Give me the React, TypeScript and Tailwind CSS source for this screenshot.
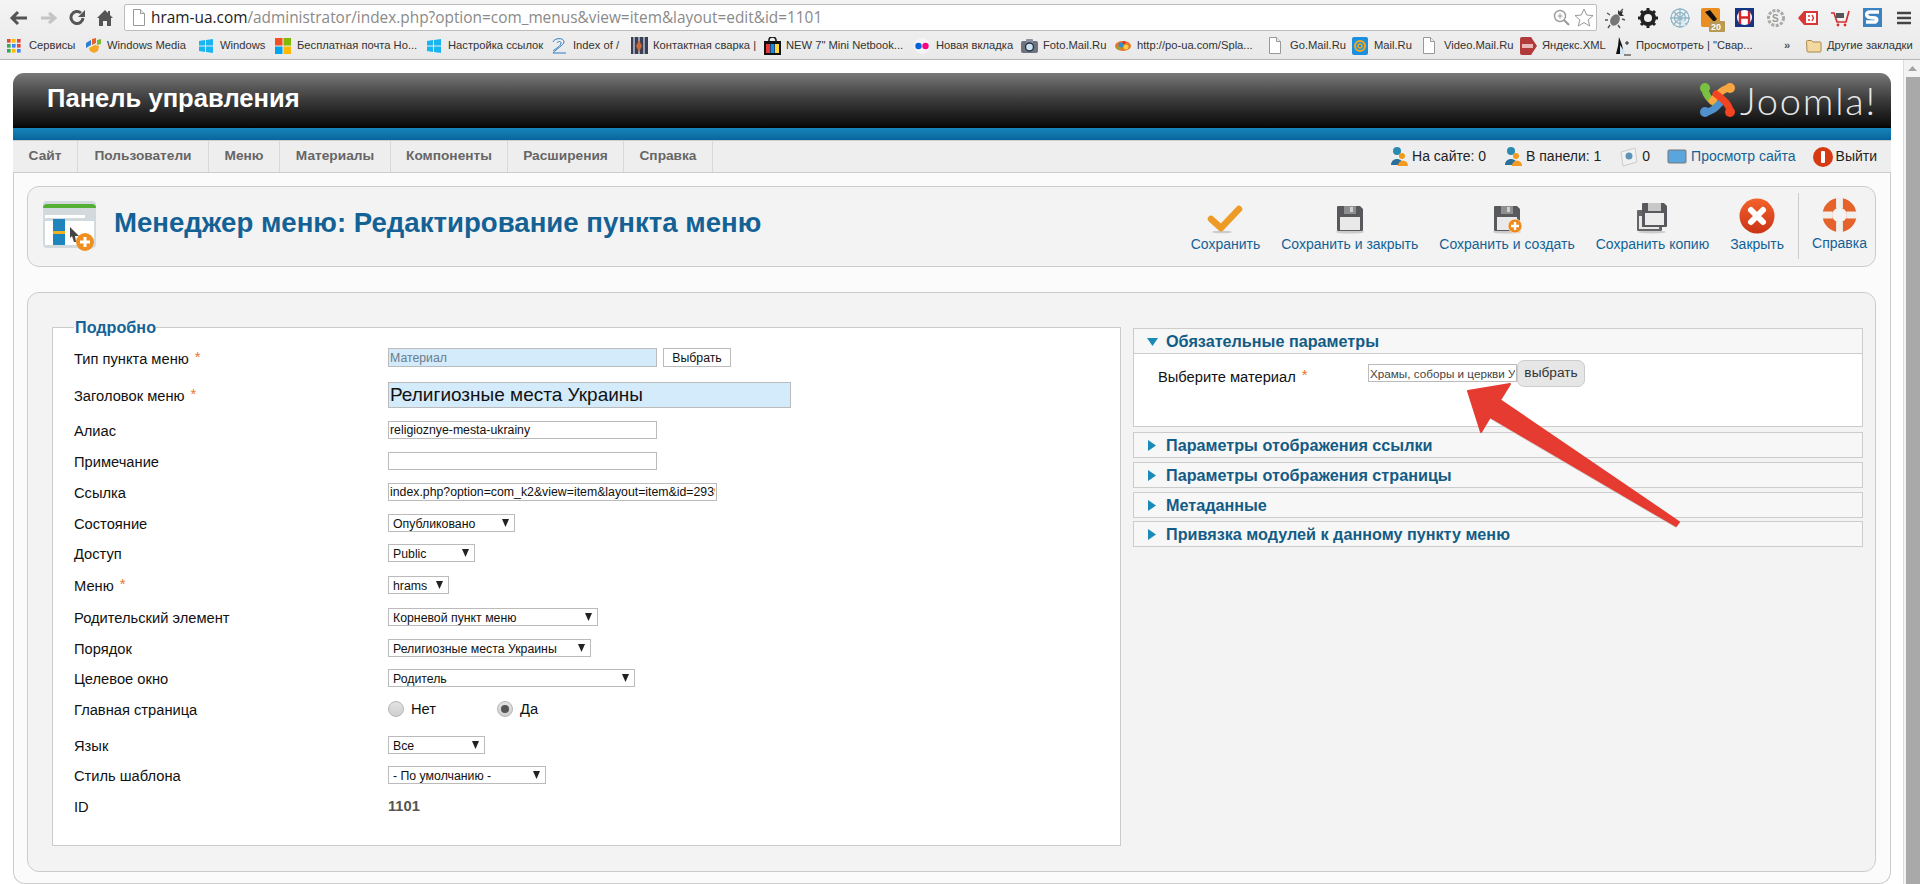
import React from "react";

const Win = ({ c = "#19b5f1" }: { c?: string }) => (
  <svg width="16" height="16" viewBox="0 0 16 16" className="shrink-0">
    <path d="M1 3l6-1v5.5H1zM8 2l7-1v6.5H8zM1 8.5h6V14l-6-1zM8 8.5h7V15l-7-1z" fill={c} />
  </svg>
);
const Page = () => (
  <svg width="14" height="17" viewBox="0 0 14 17" className="shrink-0 -mr-[3px]">
    <path d="M1.5.5h7l4 4v12h-11z" fill="#fff" stroke="#999" />
    <path d="M8.5.5v4h4" fill="#eee" stroke="#999" />
  </svg>
);

const bookmarks: { t: string; i: React.ReactNode; w: string }[] = [
  {
    t: "Сервисы",
    w: "w-[78px]",
    i: (
      <svg width="14" height="14" viewBox="0 0 14 14" className="shrink-0">
        {[0, 5, 10].map((y, r) =>
          [0, 5, 10].map((x, c) => (
            <rect key={`${r}${c}`} x={x} y={y} width="3.6" height="3.6" fill={[["#ea4335", "#fbbc05", "#ea4335"], ["#34a853", "#4285f4", "#ea4335"], ["#34a853", "#fbbc05", "#4285f4"]][r][c]} />
          )),
        )}
      </svg>
    ),
  },
  {
    t: "Windows Media",
    w: "w-[113px]",
    i: (
      <svg width="17" height="17" viewBox="0 0 17 17" className="shrink-0">
        <path d="M1 6l5-3v5l-5 3z" fill="#2d7fd3" />
        <path d="M7 2l4-1v5l-4 2z" fill="#e8612c" />
        <path d="M12 3l4-1v5l-4 1z" fill="#7cb82f" />
        <path d="M4 11l6-3 4 1-1 5-4 2-4-2z" fill="#f5a623" />
      </svg>
    ),
  },
  { t: "Windows", w: "w-[77px]", i: <Win /> },
  {
    t: "Бесплатная почта Но...",
    w: "w-[151px]",
    i: (
      <svg width="16" height="16" viewBox="0 0 16 16" className="shrink-0">
        <rect width="7.5" height="7.5" fill="#f25022" />
        <rect x="8.5" width="7.5" height="7.5" fill="#7fba00" />
        <rect y="8.5" width="7.5" height="7.5" fill="#00a4ef" />
        <rect x="8.5" y="8.5" width="7.5" height="7.5" fill="#ffb900" />
      </svg>
    ),
  },
  { t: "Настройка ссылок", w: "w-[125px]", i: <Win /> },
  {
    t: "Index of /",
    w: "w-[80px]",
    i: (
      <svg width="16" height="18" viewBox="0 0 16 18" className="shrink-0">
        <path d="M2 5c1-4 11-5 11 0 0 3-8 7-11 11h13M6 6c1-2 4-2 4 0 0 3-6 6-8 8" fill="none" stroke="#2f7fc6" strokeWidth="1" />
      </svg>
    ),
  },
  {
    t: "Контактная сварка |",
    w: "w-[133px]",
    i: (
      <svg width="17" height="17" viewBox="0 0 17 17" className="shrink-0">
        <rect width="17" height="17" fill="#3a3f55" />
        <path d="M3 0v17M8 0v17M13 0v17" stroke="#9aa0ae" strokeWidth="2" />
        <path d="M8 3l3 6-3 6-3-6z" fill="#c96a3a" />
      </svg>
    ),
  },
  {
    t: 'NEW 7" Mini Netbook...',
    w: "w-[150px]",
    i: (
      <svg width="17" height="18" viewBox="0 0 17 18" className="shrink-0">
        <rect y="4" width="17" height="14" fill="#111" />
        <rect x="2" y="7" width="4" height="9" fill="#e53935" />
        <rect x="6.5" y="7" width="4" height="9" fill="#1e88e5" />
        <rect x="11" y="7" width="4" height="9" fill="#fdd835" />
        <path d="M5 5V3a3.5 3 0 017 0v2" fill="none" stroke="#111" strokeWidth="1.5" />
      </svg>
    ),
  },
  {
    t: "Новая вкладка",
    w: "w-[107px]",
    i: (
      <svg width="16" height="16" viewBox="0 0 16 16" className="shrink-0">
        <circle cx="8" cy="8" r="8" fill="#f4f4f8" />
        <circle cx="4.5" cy="8" r="3.2" fill="#0063dc" />
        <circle cx="11.5" cy="8" r="3.2" fill="#ff0084" />
      </svg>
    ),
  },
  {
    t: "Foto.Mail.Ru",
    w: "w-[94px]",
    i: (
      <svg width="17" height="17" viewBox="0 0 17 17" className="shrink-0">
        <rect y="4" width="17" height="12" rx="2" fill="#6d7480" />
        <rect x="5" y="2" width="7" height="4" rx="1" fill="#8b919c" />
        <circle cx="8.5" cy="10" r="4" fill="#cfe3f2" stroke="#234" strokeWidth="1.4" />
      </svg>
    ),
  },
  {
    t: "http://po-ua.com/Spla...",
    w: "w-[153px]",
    i: (
      <svg width="16" height="14" viewBox="0 0 16 14" className="shrink-0">
        <ellipse cx="8" cy="7" rx="8" ry="5" fill="#e8762b" />
        <circle cx="6" cy="6" r="2.5" fill="#2a8fd6" />
        <circle cx="11" cy="8" r="2.5" fill="#f4d03f" />
        <circle cx="4" cy="9" r="1.6" fill="#6bbb3a" />
        <circle cx="9" cy="3.5" r="1.6" fill="#d6322a" />
      </svg>
    ),
  },
  { t: "Go.Mail.Ru", w: "w-[84px]", i: <Page /> },
  {
    t: "Mail.Ru",
    w: "w-[70px]",
    i: (
      <svg width="16" height="18" viewBox="0 0 16 18" className="shrink-0">
        <rect width="16" height="18" rx="2" fill="#1b8fe0" />
        <circle cx="8" cy="9" r="5" fill="none" stroke="#f6a91b" strokeWidth="2" />
        <circle cx="8" cy="9" r="2" fill="none" stroke="#f6a91b" strokeWidth="1.4" />
      </svg>
    ),
  },
  { t: "Video.Mail.Ru", w: "w-[98px]", i: <Page /> },
  {
    t: "Яндекс.XML",
    w: "w-[94px]",
    i: (
      <svg width="17" height="18" viewBox="0 0 17 18" className="shrink-0">
        <path d="M0 2a2 2 0 012-2h9l6 9-6 9H2a2 2 0 01-2-2z" fill="#b23a3a" />
        <rect x="2" y="7" width="11" height="4" fill="#e9b7b7" />
      </svg>
    ),
  },
  {
    t: 'Просмотреть | "Свар...',
    w: "w-[170px]",
    i: (
      <svg width="17" height="20" viewBox="0 0 17 20" className="shrink-0">
        <path d="M5 1l3 8 2 9H2l2-8z" fill="#111" />
        <path d="M6 9l6 9H6z" fill="#cfe6f7" />
        <path d="M11 7h4M13 5v4M10 19h7" stroke="#222" strokeWidth="1" />
      </svg>
    ),
  },
];

const Ext = ({ children }: { children: React.ReactNode }) => (
  <svg width="22" height="22" viewBox="0 0 22 22" className="shrink-0">
    {children}
  </svg>
);

const extensions = [
  <Ext key="a">
    <ellipse cx="10" cy="13" rx="4.5" ry="6" fill="#777" transform="rotate(30 10 13)" />
    <path d="M5 8l-3-2M3 13H0M5 18l-2 3M15 5l3-3M17 12l3 1M13 18l2 3" stroke="#555" strokeWidth="1.4" />
    <path d="M13 3l2 2 3-1-1 3 2 2-4 0-2-2z" fill="#333" />
  </Ext>,
  <Ext key="b">
    <circle cx="11" cy="11" r="6" fill="none" stroke="#222" strokeWidth="4" />
    <path d="M11 1v20M1 11h20M4 4l14 14M18 4L4 18" stroke="#222" strokeWidth="3" strokeDasharray="3 14" strokeDashoffset="0" />
  </Ext>,
  <Ext key="c">
    <g fill="none" stroke="#8fb7c9" strokeWidth="1.3">
      <circle cx="11" cy="11" r="9" />
      <circle cx="11" cy="11" r="5.5" />
      <path d="M11 1v20M1 11h20M4 4l14 14M18 4L4 18" />
    </g>
    <path d="M13 13l6 2-3 1 1 4-5-3z" fill="#dce9ef" />
  </Ext>,
  <svg key="d" width="26" height="26" viewBox="0 0 26 26" className="shrink-0 mt-[6px] ml-[3px]">
    <rect x="0" y="0" width="19" height="19" rx="2" fill="#e88e22" />
    <path d="M4 4l5-2 7 9-3 3z" fill="#111" />
    <rect x="8" y="13" width="16" height="11" rx="1" fill="#b89a55" />
    <text x="10" y="22" fontSize="9" fontWeight="700" fill="#fff" fontFamily="Liberation Sans, sans-serif">20</text>
  </svg>,
  <svg key="e" width="19" height="19" viewBox="0 0 19 19" className="shrink-0">
    <rect width="19" height="19" fill="#16347f" />
    <circle cx="9.5" cy="9.5" r="7.5" fill="#fff" />
    <path d="M5 3v13M14 3v13M5 9.5h9" stroke="#d8232a" strokeWidth="2.4" />
  </svg>,
  <Ext key="f">
    <circle cx="11" cy="11" r="7.5" fill="none" stroke="#aaa" strokeWidth="3" strokeDasharray="3 1.5" />
    <text x="7" y="15" fontSize="10" fontWeight="700" fill="#999" fontFamily="Liberation Sans, sans-serif">S</text>
  </Ext>,
  <Ext key="g">
    <path d="M1 11l6-7h14v14H7z" fill="#d93636" />
    <rect x="9" y="6" width="10" height="10" fill="#fff" />
    <path d="M12 8v2M12 12v2M15 8l1.5 3-1.5 3" stroke="#d93636" strokeWidth="1.5" fill="none" />
  </Ext>,
  <Ext key="h">
    <path d="M2 6h3l3 9h9l3-11" fill="none" stroke="#d32f2f" strokeWidth="1.7" />
    <circle cx="9" cy="18" r="1.4" fill="#d32f2f" />
    <circle cx="16" cy="18" r="1.4" fill="#d32f2f" />
    <rect x="7" y="6" width="8" height="5" fill="#555" />
  </Ext>,
  <svg key="i" width="19" height="19" viewBox="0 0 19 19" className="shrink-0">
    <rect width="19" height="19" fill="#3b82c0" />
    <path d="M16 4H7C2 4 3 9 7 9.5l5 .5c3 .5 2 4-1 4H3" fill="none" stroke="#fff" strokeWidth="3.4" />
  </svg>,
  <svg key="j" width="14" height="14" viewBox="0 0 14 14" className="shrink-0">
    <path d="M0 2h14M0 7h14M0 12h14" stroke="#444" strokeWidth="2.6" />
  </svg>,
];

const Floppy = ({ plus }: { plus?: boolean }) => (
  <svg width="30" height="30" viewBox="0 0 30 30">
    <ellipse cx="15" cy="28" rx="14" ry="1.6" fill="#ccc" />
    <path d="M2 3a1 1 0 011-1h22l3 3v21a1 1 0 01-1 1H3a1 1 0 01-1-1z" fill="#58595c" />
    <rect x="9" y="2" width="12" height="8" fill="#8f8f8f" />
    <rect x="15" y="3" width="3" height="5" fill="#d0d0d0" />
    <rect x="5" y="13" width="20" height="13" fill="#e9e9e9" />
    {plus && (
      <g>
        <circle cx="23" cy="22" r="7" fill="#ee8a1c" stroke="#fff" strokeWidth="0.6" />
        <path d="M23 18v8M19 22h8" stroke="#fff" strokeWidth="2.4" />
      </g>
    )}
  </svg>
);

const tools: { t: string; i: React.ReactNode }[] = [
  {
    t: "Сохранить",
    i: (
      <svg width="36" height="30" viewBox="0 0 36 30">
        <ellipse cx="15" cy="28" rx="10" ry="1.3" fill="#ccc" />
        <path d="M4 15l10 9L32 5" fill="none" stroke="#ee9a27" strokeWidth="6.5" strokeLinecap="round" strokeLinejoin="round" />
      </svg>
    ),
  },
  { t: "Сохранить и закрыть", i: <Floppy /> },
  { t: "Сохранить и создать", i: <Floppy plus /> },
  {
    t: "Сохранить копию",
    i: (
      <svg width="32" height="32" viewBox="0 0 32 32">
        <ellipse cx="16" cy="30" rx="14" ry="1.4" fill="#ccc" />
        <rect x="1" y="8" width="25" height="21" rx="1" fill="#666" />
        <rect x="3" y="14" width="20" height="13" fill="#e8e8e8" />
        <path d="M6 2a1 1 0 011-1h21l3 3v20a1 1 0 01-1 1H6z" fill="#58595c" />
        <rect x="12" y="1" width="13" height="8" fill="#c8c8c8" />
        <rect x="9" y="11" width="19" height="12" fill="#ececec" />
      </svg>
    ),
  },
  {
    t: "Закрыть",
    i: (
      <svg width="36" height="36" viewBox="0 0 36 36">
        <defs>
          <linearGradient id="rd" x1="0" y1="0" x2="0" y2="1">
            <stop offset="0" stopColor="#f4622c" />
            <stop offset="1" stopColor="#c93315" />
          </linearGradient>
        </defs>
        <circle cx="18" cy="18" r="17.5" fill="url(#rd)" />
        <path d="M12 12l12 12M24 12L12 24" stroke="#fff" strokeWidth="6" strokeLinecap="round" />
      </svg>
    ),
  },
];

const inputBase = "block h-full bg-white border border-[#bbb] px-[1px] text-[12.3px] text-[#111] outline-none";

const Sel = ({ v, w }: { v: string; w: string }) => (
  <span className={`relative block h-full ${w}`}>
    <select defaultValue={v} className="appearance-none block w-full h-full bg-white border border-[#bbb] pl-[4px] text-[12.3px] text-[#111] outline-none">
      <option>{v}</option>
    </select>
    <svg width="7" height="8" viewBox="0 0 7 8" className="absolute right-[6px] top-[5px]">
      <path d="M0 0h7L3.5 8z" fill="#222" />
    </svg>
  </span>
);

const Radio = ({ on }: { on?: boolean }) => (
  <span className="flex items-center justify-center w-[16px] h-[16px] rounded-full border border-[#b5b5b5] bg-gradient-to-b from-[#e2e2e2] to-[#cfcfcf]">
    {on && <span className="w-[8px] h-[8px] rounded-full bg-[#555]" />}
  </span>
);

const Star = () => <span className="text-[#e8762b] text-[15px] leading-none relative -top-[3px] ml-[6px]">*</span>;

const Row = ({ label, star, cls, children }: { label: string; star?: boolean; cls: string; children: React.ReactNode }) => (
  <div className={`flex items-center ${cls}`}>
    <span className="w-[314px] shrink-0 pt-[3px] text-[14.7px] text-[#111] flex items-center">
      {label}
      {star && <Star />}
    </span>
    {children}
  </div>
);

const Acc = ({ t, open, cls }: { t: string; open?: boolean; cls: string }) => (
  <div className={`flex items-center h-[26px] border border-[#ccc] bg-[#f7f7f7] pl-[13px] ${cls}`}>
    {open ? (
      <svg width="11" height="8" viewBox="0 0 11 8" className="shrink-0 mr-[8px] mt-[1px]">
        <path d="M0 0h11L5.5 8z" fill="#1a8ab8" />
      </svg>
    ) : (
      <svg width="8" height="11" viewBox="0 0 8 11" className="shrink-0 ml-[1px] mr-[10px]">
        <path d="M0 0l8 5.5L0 11z" fill="#1a8ab8" />
      </svg>
    )}
    <span className="text-[16.2px] font-bold text-[#135c85]">{t}</span>
  </div>
);

const Person = ({ c }: { c: string }) => (
  <svg width="20" height="22" viewBox="0 0 20 22" className="shrink-0">
    <circle cx="8" cy="5" r="4" fill={c} />
    <path d="M2 19c0-8 12-8 12 0z" fill="#2a6f9c" />
    <path d="M9 20c0-7 10-7 10 0z" fill="#f39a1e" />
    <circle cx="13" cy="10" r="3" fill="#f39a1e" />
  </svg>
);

const tabs = [
  ["Сайт", "w-[65px]"],
  ["Пользователи", "w-[131px]"],
  ["Меню", "w-[71px]"],
  ["Материалы", "w-[111px]"],
  ["Компоненты", "w-[117px]"],
  ["Расширения", "w-[116px]"],
  ["Справка", "w-[89px]"],
];

export default function App() {
  return (
    <div className="relative w-[1920px] h-[884px] overflow-hidden flex flex-col bg-white font-['Liberation_Sans',Arial,sans-serif]">
      {/* Browser chrome */}
      <div className="h-[60px] shrink-0 border-b border-[#b5b5b5] bg-gradient-to-b from-[#f4f4f4] to-[#e9e9e9] flex flex-col">
        <div className="h-[32px] flex items-center pt-[3px]">
          <div className="w-[124px] shrink-0 flex items-center pl-[9px] gap-[11px]">
            <svg width="20" height="16" viewBox="0 0 20 16">
              <path d="M18 8H4M9 2L3 8l6 6" fill="none" stroke="#555" strokeWidth="3" />
            </svg>
            <svg width="18" height="16" viewBox="0 0 18 16">
              <path d="M1 8h13M9 3l6 5-6 5" fill="none" stroke="#c4c4c4" strokeWidth="3" />
            </svg>
            <svg width="17" height="17" viewBox="0 0 17 17">
              <path d="M14 9a6 6 0 11-2-5" fill="none" stroke="#555" strokeWidth="3" />
              <path d="M16 1v7h-7z" fill="#555" />
            </svg>
            <svg width="16" height="16" viewBox="0 0 16 16">
              <path d="M8 0L0 8h2v8h4v-5h4v5h4V8h2l-3-3V1h-2v2z" fill="#555" />
            </svg>
          </div>
          <div className="w-[1473px] h-[27px] shrink-0 bg-white border border-[#bdbdbd] rounded-[2px] flex items-center pl-[7px] pr-[2px] font-['Open_Sans',sans-serif]">
            <Page />
            <span className="ml-[8px] text-[15.4px] text-[#222] whitespace-nowrap">
              hram-ua.com
              <span className="text-[#8a8a8a]">/administrator/index.php?option=com_menus&amp;view=item&amp;layout=edit&amp;id=1101</span>
            </span>
            <span className="ml-auto flex items-center gap-[4px]">
              <svg width="17" height="17" viewBox="0 0 17 17">
                <circle cx="7" cy="7" r="5.5" fill="none" stroke="#999" strokeWidth="1.4" />
                <path d="M11 11l5 5" stroke="#999" strokeWidth="2" />
                <path d="M7 4.5v5M4.5 7h5" stroke="#999" />
              </svg>
              <svg width="20" height="19" viewBox="0 0 20 19">
                <path d="M10 1l2.7 6 6.300.6-4.800 4.200 1.500 6.200L10 14.700l-5.700 3.300 1.500-6.200L1 7.600 7.300 7z" fill="#fff" stroke="#999" />
              </svg>
            </span>
          </div>
          <div className="flex-1 flex items-center pl-[3px]">
            {extensions.map((e, i) => (
              <div key={i} className="w-[32px] shrink-0 flex justify-center">
                {e}
              </div>
            ))}
          </div>
        </div>
        <div className="flex-1 flex items-center pl-[7px] text-[11.2px] text-[#333]">
          {bookmarks.map((b) => (
            <div key={b.t} className={`flex items-center shrink-0 whitespace-nowrap ${b.w}`}>
              <span className="w-[17px] h-[17px] shrink-0 flex items-center justify-start">{b.i}</span>
              <span className="ml-[5px]">{b.t}</span>
            </div>
          ))}
          <div className="w-[22px] shrink-0 text-[#555] font-bold">»</div>
          <svg width="16" height="14" viewBox="0 0 16 14" className="shrink-0">
            <path d="M.5 2.500a1 1 0 011-1h4l1.500 1.500h7a1 1 0 011 1v8a1 1 0 01-1 1h-12a1 1 0 01-1-1z" fill="#f3d9a0" stroke="#a8884e" />
          </svg>
          <span className="ml-[5px] whitespace-nowrap">Другие закладки</span>
        </div>
      </div>

      {/* Page + scrollbar */}
      <div className="flex-1 flex min-h-0">
        <div className="w-[1903px] shrink-0 pl-[13px] pr-[12px] pt-[13px] flex flex-col">
          {/* Header */}
          <div className="h-[55px] shrink-0 rounded-t-[11px] bg-gradient-to-b from-[#797979] via-[#3c3c3c] to-[#0c0c0c] border-b-2 border-[#050505] flex items-center justify-between pl-[34px] pr-[14px]">
            <h1 className="text-[25.6px] font-bold text-white pb-[2px]">Панель управления</h1>
            <div className="flex items-center">
              <svg width="37" height="36" viewBox="0 0 37 36">
                <g fill="none" strokeWidth="7" strokeLinecap="round">
                  <path d="M6 6c0 8 6 12 12 17" stroke="#7ac143" />
                  <path d="M31 6c-8 0-13 8-18 13" stroke="#f9a541" />
                  <path d="M6 30c8 0 12-6 18-12" stroke="#5091cd" />
                  <path d="M31 30c0-7-6-12-14-18" stroke="#f44321" />
                </g>
                <circle cx="6" cy="6" r="5" fill="#7ac143" />
                <circle cx="31" cy="6" r="5" fill="#f9a541" />
                <circle cx="6" cy="30" r="5" fill="#5091cd" />
                <circle cx="31" cy="30" r="5" fill="#f44321" />
              </svg>
              <span className="ml-[4px] text-[38px] leading-none font-light text-[#e8e8e8] font-['Lato',sans-serif] tracking-[1.8px]">Joomla!</span>
            </div>
          </div>
          <div className="h-[12px] shrink-0 bg-gradient-to-b from-[#1585bb] to-[#08669b]" />
          {/* Menu bar */}
          <div className="h-[33px] shrink-0 bg-[#eeeeee] border-y border-[#cccccc] flex items-stretch">
            {tabs.map(([t, w]) => (
              <div key={t} className={`flex items-center justify-center border-r border-[#d8d8d8] text-[13.7px] font-bold text-[#666] ${w}`}>
                {t}
              </div>
            ))}
            <div className="ml-auto flex items-center pr-[14px] text-[14px] text-[#222]">
              <Person c="#2a8ab0" />
              <span className="ml-[3px]">На сайте: 0</span>
              <span className="ml-[17px]">
                <Person c="#2a8ab0" />
              </span>
              <span className="ml-[3px]">В панели: 1</span>
              <svg width="20" height="22" viewBox="0 0 20 22" className="ml-[18px] shrink-0">
                <path d="M2 6l14-4 2 14-14 4z" fill="#f1f1f1" stroke="#ccc" />
                <circle cx="10" cy="10" r="3.500" fill="#5e93b5" />
              </svg>
              <span className="ml-[3px]">0</span>
              <svg width="20" height="18" viewBox="0 0 20 18" className="ml-[17px] shrink-0">
                <rect x="1" y="2" width="18" height="13" rx="1" fill="#5aa5dd" stroke="#777" />
              </svg>
              <span className="ml-[4px] text-[#146295]">Просмотр сайта</span>
              <svg width="20" height="20" viewBox="0 0 20 20" className="ml-[17px] shrink-0">
                <circle cx="10" cy="10" r="10" fill="#d63a12" />
                <rect x="8" y="4" width="4" height="12" rx="1" fill="#fff" />
              </svg>
              <span className="ml-[3px]">Выйти</span>
            </div>
          </div>

          {/* Body */}
          <div className="flex-1 min-h-0 bg-[#fbfbfb] border-x border-b border-[#cccccc] rounded-b-[12px] pl-[13px] pr-[14px] pt-[13px] flex flex-col">
            {/* Toolbar */}
            <div className="h-[81px] shrink-0 rounded-[12px] border border-[#cccccc] bg-[#f3f3f3] flex items-center justify-between pl-[15px] pr-[8px]">
              <div className="flex items-center gap-[18px]">
                <svg width="53" height="51" viewBox="0 0 53 51">
                  <rect x="0" y="0" width="53" height="47" rx="4" fill="#d3dadd" />
                  <path d="M0 7a4 4 0 014-4h45a4 4 0 014 4v0H0z" fill="#54b034" />
                  <rect x="2" y="14" width="40" height="3" fill="#fff" />
                  <rect x="2" y="20" width="49" height="24" fill="#fff" />
                  <rect x="10" y="18" width="12" height="26" fill="#1e86bd" />
                  <rect x="10" y="30" width="12" height="3" fill="#f2b21f" />
                  <path d="M27 26l9 9-4 0 1 6-2 0-2-6-2 2z" fill="#444" />
                  <circle cx="42" cy="41" r="9" fill="#ef8f1f" />
                  <path d="M42 36v10M37 41h10" stroke="#fff" strokeWidth="3" />
                </svg>
                <h2 className="pb-[7px] text-[27.6px] font-bold text-[#146295] whitespace-nowrap">Менеджер меню: Редактирование пункта меню</h2>
              </div>
              <div className="flex items-stretch">
                <div className="flex gap-[21px] pt-[4px]">
                  {tools.map((b) => (
                    <div key={b.t} className="flex flex-col items-center text-[14px] text-[#146295] whitespace-nowrap">
                      <div className="h-[36px] flex items-end justify-center">{b.i}</div>
                      <span>{b.t}</span>
                    </div>
                  ))}
                </div>
                <div className="ml-[14px] pl-[13px] border-l border-[#cccccc] flex flex-col items-center text-[14px] text-[#146295] pt-[4px] h-[66px] mt-[-1px]">
                  <div className="h-[36px] flex items-end justify-center">
                    <svg width="35" height="36" viewBox="0 0 36 36">
                      <circle cx="18" cy="18" r="12.500" fill="none" stroke="#e5622a" strokeWidth="10" />
                      <path d="M18 0v11M18 25v11M0 18h11M25 18h11" stroke="#f1efec" strokeWidth="7" />
                    </svg>
                  </div>
                  <span>Справка</span>
                </div>
              </div>
            </div>

            {/* Form */}
            <div className="mt-[25px] h-[580px] shrink-0 rounded-[12px] border border-[#cccccc] bg-[#f3f3f3] pl-[24px] pr-[12px] flex">
              <fieldset className="mt-[25px] w-[1069px] h-[528px] shrink-0 border border-[#cccccc] bg-white pl-[21px] flex flex-col">
                <legend className="pl-[1px] pr-0 text-[16.2px] leading-[18px] font-bold text-[#146295]">Подробно</legend>
                <Row label="Тип пункта меню" star cls="h-[19px] mt-[12px]">
                  <input readOnly value="Материал" className={`${inputBase} w-[269px] !bg-[#d4ebfb] !text-[#6a7c8c]`} />
                  <button className="ml-[6px] w-[68px] h-full bg-white border border-[#bbb] text-[12.3px] text-[#111]">Выбрать</button>
                </Row>
                <Row label="Заголовок меню" star cls="h-[26px] mt-[15px]">
                  <input readOnly value="Религиозные места Украины" className="block h-full w-[403px] bg-[#d4ebfb] border border-[#bbb] px-[1px] text-[19px] text-[#111] outline-none" />
                </Row>
                <Row label="Алиас" cls="h-[18px] mt-[13px]">
                  <input readOnly value="religioznye-mesta-ukrainy" className={`${inputBase} w-[269px]`} />
                </Row>
                <Row label="Примечание" cls="h-[18px] mt-[13px]">
                  <input readOnly value="" className={`${inputBase} w-[269px]`} />
                </Row>
                <Row label="Ссылка" cls="h-[18px] mt-[13px]">
                  <input readOnly value="index.php?option=com_k2&view=item&layout=item&id=2939" className={`${inputBase} w-[329px]`} />
                </Row>
                <Row label="Состояние" cls="h-[18px] mt-[13px]">
                  <Sel v="Опубликовано" w="w-[127px]" />
                </Row>
                <Row label="Доступ" cls="h-[18px] mt-[12px]">
                  <Sel v="Public" w="w-[87px]" />
                </Row>
                <Row label="Меню" star cls="h-[18px] mt-[14px]">
                  <Sel v="hrams" w="w-[61px]" />
                </Row>
                <Row label="Родительский элемент" cls="h-[18px] mt-[14px]">
                  <Sel v="Корневой пункт меню" w="w-[210px]" />
                </Row>
                <Row label="Порядок" cls="h-[18px] mt-[13px]">
                  <Sel v="Религиозные места Украины" w="w-[203px]" />
                </Row>
                <Row label="Целевое окно" cls="h-[18px] mt-[12px]">
                  <Sel v="Родитель" w="w-[247px]" />
                </Row>
                <Row label="Главная страница" cls="h-[16px] mt-[14px]">
                  <Radio />
                  <span className="ml-[7px] w-[86px] text-[14.7px] text-[#111]">Нет</span>
                  <Radio on />
                  <span className="ml-[7px] text-[14.7px] text-[#111]">Да</span>
                </Row>
                <Row label="Язык" cls="h-[18px] mt-[19px]">
                  <Sel v="Все" w="w-[97px]" />
                </Row>
                <Row label="Стиль шаблона" cls="h-[18px] mt-[12px]">
                  <Sel v="- По умолчанию -" w="w-[158px]" />
                </Row>
                <Row label="ID" cls="h-[18px] mt-[13px]">
                  <span className="text-[14.7px] font-bold text-[#555]">1101</span>
                </Row>
              </fieldset>

              <div className="ml-[12px] flex-1 pt-[35px] flex flex-col">
                <Acc t="Обязательные параметры" open cls="" />
                <div className="h-[73px] bg-white border-x border-b border-[#ccc] flex items-start pl-[24px]">
                  <span className="w-[210px] shrink-0 mt-[12px] text-[14.7px] text-[#111] flex items-center">
                    Выберите материал
                    <Star />
                  </span>
                  <input readOnly value="Храмы, соборы и церкви Украины" className="mt-[10px] w-[149px] h-[18px] bg-white border border-[#bbb] px-[1px] text-[11.7px] text-[#444] outline-none" />
                  <button className="mt-[6px] w-[68px] h-[27px] rounded-[7px] bg-[#e6e6e6] border border-[#ccc] text-[13.7px] text-[#333]">выбрать</button>
                </div>
                <Acc t="Параметры отображения ссылки" cls="mt-[5px]" />
                <Acc t="Параметры отображения страницы" cls="mt-[4px]" />
                <Acc t="Метаданные" cls="mt-[4px]" />
                <Acc t="Привязка модулей к данному пункту меню" cls="mt-[3px]" />
              </div>
            </div>
          </div>
        </div>
        {/* Scrollbar */}
        <div className="flex-1 bg-[#f3f3f3] border-l border-[#dcdcdc] flex flex-col">
          <div className="h-[17px] flex items-center justify-center">
            <svg width="9" height="5" viewBox="0 0 9 5">
              <path d="M0 5L4.500 0 9 5z" fill="#a3a3a3" />
            </svg>
          </div>
          <div className="flex-1 ml-[2px] bg-[#a9a9a9]" />
        </div>
      </div>

      {/* Annotation arrow */}
      <svg width="240" height="160" viewBox="0 0 240 160" className="absolute left-[1460px] top-[378px]">
        <path d="M50 6L8 13l13 41 9-15 186 109 3-4L40 22z" fill="#bbb" transform="translate(0 2)" opacity="0.6" />
        <path d="M50 6L8 13l13 41 9-15 186 109 3-4L40 22z" fill="#e53b30" stroke="#e53b30" strokeWidth="2" strokeLinejoin="round" />
      </svg>
    </div>
  );
}
